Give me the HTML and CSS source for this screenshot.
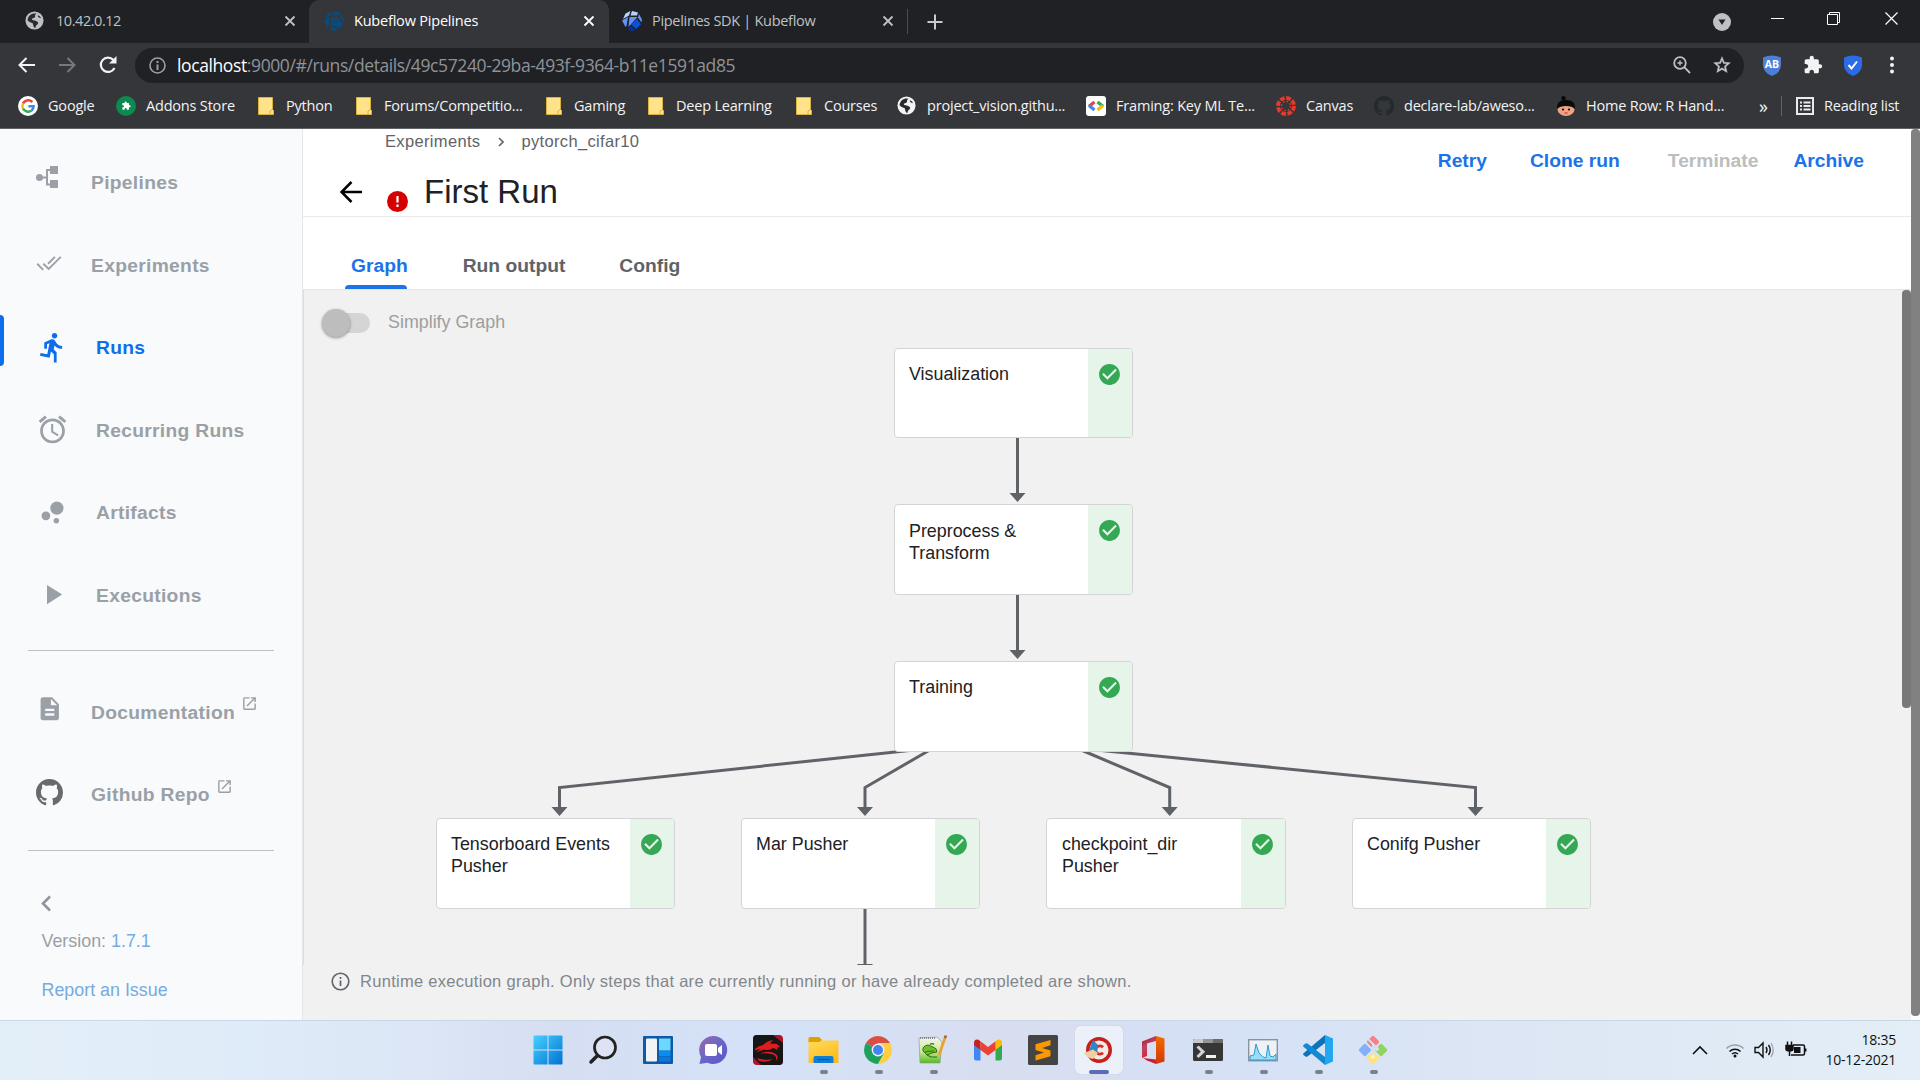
FILE: index.html
```html
<!DOCTYPE html>
<html lang="en">
<head>
<meta charset="utf-8">
<title>Kubeflow Pipelines</title>
<link rel="stylesheet" href="styles.css">
</head>
<body>
<svg class="defs" width="0" height="0">
  <defs>
    <symbol id="close" viewBox="0 0 12 12"><path d="M1.5 1.5l9 9M10.5 1.5l-9 9" stroke="currentColor" stroke-width="1.8" fill="none"/></symbol>
    <symbol id="globe" viewBox="0 0 20 20"><circle cx="10" cy="10" r="9.500" fill="currentColor"/><path d="M2.600 9.500c1.400 2 3.200 2.600 4.800 3 1 .300 1.100 1.300 1.200 2.300.1 1.300.8 1.700 1.200 2.800h1.400c.2-1.600.3-2.200 1.400-3 1.300-.9 1.800-2.400.5-3.300-1.300-.8-2.400-1.400-4.200-1.500-1.500-.1-2-.8-1.200-1.800.7-.9 2-.5 2.700-1.400.6-.8-.2-1.500.3-2.300.3-.6.8-1 1.400-1.500C7.500 1.600 3.200 4.500 2.600 9.500zM13.500 4.500c-.3 1.500.6 2.600 3.500 3.200-.8-1.700-1.800-2.700-3.500-3.200z" fill="#2b2c2f"/></symbol>
    <symbol id="folder" viewBox="0 0 16 18"><path d="M.5.5h14v12l1 1v4H.5z" fill="#ffe28a" stroke="#dcb23e"/><path d="M12 17.500v-3.500l2.500-1.500" fill="none" stroke="#dcb23e"/></symbol>
    <symbol id="github" viewBox="0 0 16 16"><path d="M8 0C3.580 0 0 3.580 0 8c0 3.540 2.290 6.530 5.470 7.590.4.070.55-.17.55-.38 0-.19-.01-.82-.01-1.490-2.010.37-2.530-.49-2.690-.94-.09-.23-.48-.94-.82-1.130-.28-.15-.68-.52-.01-.53.63-.01 1.080.58 1.230.82.72 1.210 1.870.87 2.330.66.07-.52.28-.87.51-1.070-1.780-.2-3.640-.89-3.640-3.950 0-.87.31-1.590.82-2.150-.08-.2-.36-1.020.08-2.120 0 0 .67-.21 2.200.82.64-.18 1.320-.27 2-.27s1.360.09 2 .27c1.530-1.040 2.200-.82 2.200-.82.44 1.100.16 1.920.08 2.120.51.56.82 1.270.82 2.150 0 3.070-1.870 3.750-3.650 3.950.29.25.54.73.54 1.480 0 1.070-.01 1.930-.01 2.200 0 .21.15.46.55.38A8.010 8.010 0 0 0 16 8c0-4.420-3.580-8-8-8z" fill="currentColor"/></symbol>
    <symbol id="kube" viewBox="0 0 22 22"><path class="k1" d="M4.500 3.500L9.500 1 8 5.500 2 9z"/><path class="k1" d="M11 1l6 1.500-1 3H9.500z"/><path class="k2" d="M1 10.500L7 7l-1.500 9L4.500 17z"/><path class="k2" d="M8.500 7h8L7.500 17z"/><path class="k2" d="M18 4l3 5.500-.5 3-3.500-5z"/><path class="k3" d="M16 9l4 5.500-5 4.500-5-4.500z"/><path class="k4" d="M7 19l2.500-3 4.500 4-3 1.500z"/></symbol>
    <symbol id="ok" viewBox="0 0 24 24"><path d="M12 2C6.480 2 2 6.480 2 12s4.480 10 10 10 10-4.480 10-10S17.520 2 12 2zm-2 15l-5-5 1.410-1.410L10 14.170l7.590-7.590L19 8l-9 9z" fill="#34a853"/></symbol>
    <symbol id="ext" viewBox="0 0 24 24"><path d="M19 19H5V5h7V3H5c-1.110 0-2 .9-2 2v14c0 1.100.89 2 2 2h14c1.100 0 2-.9 2-2v-7h-2v7zM14 3v2h3.590l-9.830 9.830 1.410 1.410L19 6.410V10h2V3h-7z" fill="currentColor"/></symbol>
    <symbol id="puzzle" viewBox="0 0 24 24"><path d="M20.500 11H19V7c0-1.100-.9-2-2-2h-4V3.500C13 2.120 11.880 1 10.500 1S8 2.120 8 3.500V5H4c-1.100 0-1.990.9-1.990 2v3.800H3.500c1.490 0 2.700 1.210 2.700 2.700s-1.210 2.700-2.700 2.700H2V20c0 1.100.9 2 2 2h3.800v-1.500c0-1.490 1.210-2.700 2.700-2.700 1.490 0 2.700 1.210 2.700 2.700V22H17c1.100 0 2-.9 2-2v-4h1.500c1.380 0 2.500-1.120 2.500-2.500S21.880 11 20.500 11z" fill="currentColor"/></symbol>
    <linearGradient id="win" x2="1" y2="1"><stop stop-color="#48d0ff"/><stop offset="1" stop-color="#0072d4"/></linearGradient>
    <linearGradient id="chat" x2="1" y2="1"><stop stop-color="#9a6aa8"/><stop offset=".5" stop-color="#6a66c8"/><stop offset="1" stop-color="#5a55c8"/></linearGradient>
    <linearGradient id="fold" x2=".6" y2="1"><stop stop-color="#ffdb5c"/><stop offset="1" stop-color="#ffbb1c"/></linearGradient>
    <linearGradient id="off" y2="1" x2=".4"><stop stop-color="#a0170f"/><stop offset=".5" stop-color="#c04468"/><stop offset="1" stop-color="#d8232f"/></linearGradient>
    <linearGradient id="off2" y2="1" x2="0"><stop stop-color="#f56a00"/><stop offset="1" stop-color="#d03a04"/></linearGradient>
    <linearGradient id="grass" x2="0" y2="1"><stop stop-color="#f4f7ee"/><stop offset=".55" stop-color="#cfe89a"/><stop offset="1" stop-color="#4fbf1a"/></linearGradient>
  </defs>
</svg>

<div class="tabstrip">
  <div class="tab">
    <svg class="fav globe" width="19" height="19"><use href="#globe"/></svg><span>10.42.0.12</span>
    <svg class="x" width="12" height="12"><use href="#close"/></svg>
  </div>
  <div class="tab active">
    <svg class="fav dim" width="22" height="22"><use href="#kube"/></svg><span>Kubeflow Pipelines</span>
    <svg class="x" width="12" height="12"><use href="#close"/></svg>
  </div>
  <div class="tab third">
    <svg class="fav vivid" width="22" height="22"><use href="#kube"/></svg><span>Pipelines SDK | Kubeflow</span>
    <svg class="x" width="12" height="12"><use href="#close"/></svg>
  </div>
  <svg class="plus" width="16" height="16" viewBox="0 0 16 16"><path d="M8 .5v15M.5 8h15" stroke="#c8cace" stroke-width="2"/></svg>
  <div class="winbtns">
    <svg width="18" height="18" viewBox="0 0 18 18"><circle cx="9" cy="9" r="9" fill="#bdc1c6"/><path d="M5.500 6.500h7L9 12z" fill="#202124"/></svg>
    <svg class="min" width="13" height="13" viewBox="0 0 13 13"><path d="M0 6.500h13" stroke="#fff"/></svg>
    <svg class="max" width="13" height="13" viewBox="0 0 13 13"><path d="M.5 2.500h10v10H.5zM2.500 2.500v-2h10v10h-2" fill="none" stroke="#fff"/></svg>
    <svg class="cls" width="13" height="13" viewBox="0 0 13 13"><path d="M.5.5l12 12M12.500.5l-12 12" stroke="#fff" stroke-width="1.200"/></svg>
  </div>
</div>

<div class="toolbar">
  <div class="navbtns">
    <svg width="18" height="16" viewBox="0 0 18 16"><path d="M8.500 1L1.500 8l7 7M1.500 8H17" fill="none" stroke="#f1f3f4" stroke-width="2"/></svg>
    <svg width="18" height="16" viewBox="0 0 18 16"><path d="M9.500 1l7 7-7 7M16.500 8H1" fill="none" stroke="#76787c" stroke-width="2"/></svg>
    <svg width="20" height="20" viewBox="0 0 20 20"><path d="M16.500 13a7.200 7.200 0 1 1-1.200-8.200" fill="none" stroke="#f1f3f4" stroke-width="2.200"/><path d="M18.500 1v7.500H11z" fill="#f1f3f4"/></svg>
  </div>
  <div class="omnibox">
    <svg width="17" height="17" viewBox="0 0 17 17"><circle cx="8.500" cy="8.500" r="7.500" fill="none" stroke="#9aa0a6" stroke-width="1.600"/><path d="M8.500 7.500V13M8.500 4v2" stroke="#9aa0a6" stroke-width="2"/></svg>
    <span class="url"><b>localhost</b>:9000/#/runs/details/49c57240-29ba-493f-9364-b11e1591ad85</span>
    <svg class="zoomicon" width="18" height="18" viewBox="0 0 18 18"><g fill="none" stroke="#bdc1c6" stroke-width="1.800"><circle cx="7" cy="7" r="5.800"/><path d="M11.200 11.200L17 17"/><path d="M7 4.500v5M4.500 7h5" stroke-width="1.400"/></g></svg>
    <svg width="20" height="20" viewBox="0 0 24 24"><path d="M22 9.240l-7.190-.62L12 2 9.190 8.630 2 9.240l5.460 4.730L5.820 21 12 17.270 18.180 21l-1.630-7.030L22 9.240zM12 15.400l-3.760 2.270 1-4.280-3.320-2.880 4.380-.38L12 6.100l1.710 4.040 4.380.38-3.320 2.880 1 4.280L12 15.400z" fill="#c4c7cb" stroke="#c4c7cb" stroke-width=".5"/></svg>
  </div>
  <div class="extensions">
    <svg width="20" height="21" viewBox="0 0 20 21"><path d="M1 2.500Q10-1.500 19 2.500v8.500q-1 7-9 10Q2 18 1 11z" fill="#4d7fd9"/><text x="10" y="13" text-anchor="middle" class="ab">AB</text></svg>
    <svg class="puz" width="20" height="20"><use href="#puzzle"/></svg>
    <svg width="20" height="21" viewBox="0 0 20 21"><path d="M1 2.500Q10-1.500 19 2.500v8.500q-1 7-9 10Q2 18 1 11z" fill="#2b6be6"/><path d="M5.500 10l3 3.500 5.500-7" fill="none" stroke="#fff" stroke-width="2"/></svg>
    <svg width="6" height="18" viewBox="0 0 6 18"><g fill="#f1f3f4"><circle cx="3" cy="2.500" r="2"/><circle cx="3" cy="9" r="2"/><circle cx="3" cy="15.500" r="2"/></g></svg>
  </div>
</div>

<div class="bookmarks">
  <div class="bm"><svg width="20" height="20" viewBox="0 0 20 20"><circle cx="10" cy="10" r="10" fill="#fff"/><g fill="none" stroke-width="2.500"><path d="M14.300 6.200A5.700 5.700 0 0 0 5 7.500" stroke="#ea4335"/><path d="M5 7.500a5.700 5.700 0 0 0 0 5" stroke="#fbbc05"/><path d="M5 12.500a5.700 5.700 0 0 0 8.600 2" stroke="#34a853"/><path d="M13.600 14.500a5.700 5.700 0 0 0 2-4.200h-5.200" stroke="#4285f4"/></g></svg><span>Google</span></div>
  <div class="bm"><svg width="20" height="20" viewBox="0 0 20 20"><circle cx="10" cy="10" r="10" fill="#0c8a50"/><use href="#puzzle" x="5.500" y="5" width="9.500" height="9.500" color="#fff"/></svg><span>Addons Store</span></div>
  <div class="bm f"><svg width="16" height="18"><use href="#folder"/></svg><span>Python</span></div>
  <div class="bm f"><svg width="16" height="18"><use href="#folder"/></svg><span>Forums/Competitio...</span></div>
  <div class="bm f"><svg width="16" height="18"><use href="#folder"/></svg><span>Gaming</span></div>
  <div class="bm f"><svg width="16" height="18"><use href="#folder"/></svg><span>Deep Learning</span></div>
  <div class="bm f"><svg width="16" height="18"><use href="#folder"/></svg><span>Courses</span></div>
  <div class="bm white"><svg width="19" height="19"><use href="#globe"/></svg><span>project_vision.githu...</span></div>
  <div class="bm"><svg width="20" height="20" viewBox="0 0 20 20"><rect width="20" height="20" rx="3" fill="#fff"/><g fill="none" stroke-width="3.200"><path d="M8.500 6L3 10.300" stroke="#ea4335"/><path d="M3 9.500L8.500 14" stroke="#4285f4"/><path d="M11.500 6l5.500 4.300" stroke="#34a853"/><path d="M17 9.500L11.500 14" stroke="#fbbc05"/></g></svg><span>Framing: Key ML Te...</span></div>
  <div class="bm"><svg width="20" height="20" viewBox="0 0 20 20"><g fill="none" stroke="#e8392b"><circle cx="10" cy="10" r="8" stroke-width="3.800" stroke-dasharray="4.700 1.580"/><circle cx="10" cy="10" r="4.600" stroke-width="1.500" stroke-dasharray="1.500 2.110"/></g></svg><span>Canvas</span></div>
  <div class="bm dark"><svg width="20" height="20"><use href="#github"/></svg><span>declare-lab/aweso...</span></div>
  <div class="bm"><svg width="20" height="20" viewBox="0 0 20 20"><circle cx="7.500" cy="2.200" r="2.200" fill="#0a0a0a"/><ellipse cx="10" cy="13.500" rx="8.500" ry="6.500" fill="#f0a283"/><path d="M1 13Q0 4 10 4t9 9q-3-3-9-3t-9 3z" fill="#0a0a0a"/><circle cx="7" cy="13.500" r="1.100"/><circle cx="13" cy="13.500" r="1.100"/><path d="M8.500 17h3" stroke="#a33"/></svg><span>Home Row: R Hand...</span></div>
  <div class="bm more">»</div>
  <div class="bm reading"><svg width="18" height="18" viewBox="0 0 18 18"><path d="M1 1h16v16H1z" fill="none" stroke="#e8eaed" stroke-width="2"/><path d="M4 5.500h2M4 9h2M4 12.500h2M7.500 5.500h7M7.500 9h7M7.500 12.500h7" stroke="#e8eaed" stroke-width="1.800"/></svg><span>Reading list</span></div>
</div>

<div class="app">
  <nav class="sidenav">
    <a class="item narrow"><i><svg width="22" height="22" viewBox="0 0 22 22"><path d="M3.500 11.500H11M14 4h-3v14.500h3" fill="none" stroke="#9aa0a6" stroke-width="2"/><circle cx="3.500" cy="11.500" r="3.500" fill="#9aa0a6"/><path d="M14 0h8v8h-8zM14 14h8v8h-8z" fill="#9aa0a6"/></svg></i><span>Pipelines</span></a>
    <a class="item narrow"><i class="exp"><svg width="26" height="26" viewBox="0 0 24 24"><path fill="none" stroke="#9aa0a6" stroke-width="1.700" d="M17.500 6.300l-6.400 6.400M22.900 6.300L11.700 17.500 6.800 12.700M1.100 12.700L6.700 18.300"/></svg></i><span>Experiments</span></a>
    <a class="item current"><i><svg width="33" height="33" viewBox="0 0 24 24"><path fill="#0d6eed" d="M13.490 5.480c1.100 0 2-.9 2-2s-.9-2-2-2-2 .9-2 2 .9 2 2 2zm-3.600 13.900l1-4.400 2.100 2v6h2v-7.500l-2.100-2 .6-3c1.300 1.500 3.300 2.500 5.500 2.500v-2c-1.900 0-3.500-1-4.300-2.400l-1-1.600c-.4-.6-1-1-1.700-1-.3 0-.5.1-.8.1l-5.200 2.200v4.700h2v-3.400l1.800-.7-1.600 8.100-4.900-1-.4 2 7 1.400z"/></svg></i><span>Runs</span></a>
    <a class="item"><i><svg width="33" height="33" viewBox="0 0 24 24"><path fill="#9aa0a6" d="M22 5.720l-4.600-3.860-1.290 1.530 4.600 3.860L22 5.720zM7.880 3.390L6.600 1.860 2 5.710l1.290 1.530 4.590-3.850zM12.500 8H11v6l4.750 2.850.75-1.230-4-2.370V8zM12 4c-4.970 0-9 4.030-9 9s4.020 9 9 9c4.970 0 9-4.030 9-9s-4.030-9-9-9zm0 16c-3.870 0-7-3.130-7-7s3.130-7 7-7 7 3.130 7 7-3.130 7-7 7z"/></svg></i><span>Recurring Runs</span></a>
    <a class="item"><i><svg width="33" height="33" viewBox="0 0 24 24" fill="#9aa0a6"><circle cx="7.200" cy="14.400" r="3.200"/><circle cx="14.800" cy="18" r="2"/><circle cx="15.200" cy="8.800" r="4.800"/></svg></i><span>Artifacts</span></a>
    <a class="item"><i><svg width="33" height="33" viewBox="0 0 24 24"><path fill="#9aa0a6" d="M8 5v14l11-7z"/></svg></i><span>Executions</span></a>
    <hr>
    <a class="item narrow doc"><i><svg width="27.500" height="27.500" viewBox="0 0 24 24"><path fill="#9aa0a6" d="M14 2H6c-1.100 0-1.990.9-1.990 2L4 20c0 1.100.89 2 1.990 2H18c1.100 0 2-.9 2-2V8l-6-6zm2 16H8v-2h8v2zm0-4H8v-2h8v2zm-3-5V3.500L18.500 9H13z"/></svg></i><span>Documentation</span><svg class="ext" width="17" height="17"><use href="#ext"/></svg></a>
    <a class="item narrow gh"><i><svg width="27" height="27"><use href="#github"/></svg></i><span>Github Repo</span><svg class="ext" width="17" height="17"><use href="#ext"/></svg></a>
    <hr>
    <svg class="collapse" width="10" height="17" viewBox="0 0 10 17"><path d="M9 1.500l-7 7 7 7" fill="none" stroke="#8f959b" stroke-width="2.600"/></svg>
    <p class="ver">Version: <a>1.7.1</a></p>
    <p class="issue"><a>Report an Issue</a></p>
  </nav>

  <main class="page">
    <header class="head">
      <div class="titles">
        <div class="crumbs"><span>Experiments</span><svg width="6" height="10" viewBox="0 0 6 10"><path d="M1 1l4 4-4 4" fill="none" stroke="#5f6368" stroke-width="1.600"/></svg><span>pytorch_cifar10</span></div>
        <div class="title">
          <svg class="back" width="22" height="22" viewBox="0 0 22 22"><path d="M11.500 1L1.500 11l10 10M1.500 11H22" fill="none" stroke="#000" stroke-width="2.500"/></svg>
          <svg class="err" width="21" height="21" viewBox="0 0 21 21"><circle cx="10.500" cy="10.500" r="10.500" fill="#d50000"/><path d="M10.500 5v6.500M10.500 13.500v2.400" stroke="#fff" stroke-width="2.200"/></svg>
          <h1>First Run</h1>
        </div>
      </div>
      <div class="actions"><a>Retry</a><a>Clone run</a><a class="off">Terminate</a><a>Archive</a></div>
    </header>
    <div class="tabs"><a class="on">Graph</a><a>Run output</a><a>Config</a></div>
    <section class="graphpane">
      <div class="simplify"><span class="switch"></span>Simplify Graph</div>
      <div class="canvas">
        <svg class="edges" width="1608" height="675" viewBox="303 290 1608 675">
          <g fill="none" stroke="#5f6368" stroke-width="3">
            <path d="M1017.500 438v57M1017.500 595v57"/>
            <path d="M940 747.300L559.500 787.500V809"/><path d="M935 747L865 787.500V809"/>
            <path d="M1074 747L1169.700 787.500V809"/><path d="M1076 748L1475.500 787.500V809"/>
            <path d="M865 909v56"/>
          </g>
          <path fill="#5f6368" d="M1009.500 493h16l-8 9zM1009.500 650h16l-8 9zM551.500 807h16l-8 9zM857 807h16l-8 9zM1161.700 807h16l-8 9zM1467.500 807h16l-8 9zM857 964h16l-8 9z"/>
        </svg>
        <div class="node n1"><p>Visualization</p><div><svg width="25" height="25"><use href="#ok"/></svg></div></div>
        <div class="node n2"><p>Preprocess &amp; Transform</p><div><svg width="25" height="25"><use href="#ok"/></svg></div></div>
        <div class="node n3"><p>Training</p><div><svg width="25" height="25"><use href="#ok"/></svg></div></div>
        <div class="node n4"><p>Tensorboard Events Pusher</p><div><svg width="25" height="25"><use href="#ok"/></svg></div></div>
        <div class="node n5"><p>Mar Pusher</p><div><svg width="25" height="25"><use href="#ok"/></svg></div></div>
        <div class="node n6"><p>checkpoint_dir Pusher</p><div><svg width="25" height="25"><use href="#ok"/></svg></div></div>
        <div class="node n7"><p>Conifg Pusher</p><div><svg width="25" height="25"><use href="#ok"/></svg></div></div>
      </div>
      <div class="legend"><svg width="19" height="19" viewBox="0 0 19 19"><circle cx="9.500" cy="9.500" r="8.300" fill="none" stroke="#5f6368" stroke-width="1.600"/><path d="M9.500 8.500V14M9.500 5v2" stroke="#5f6368" stroke-width="1.700"/></svg><span>Runtime execution graph. Only steps that are currently running or have already completed are shown.</span></div>
      <div class="thumb"></div>
    </section>
  </main>
  <div class="pagebar"></div>
</div>

<footer class="taskbar">
  <div class="apps">
    <span><svg width="30" height="30" viewBox="0 0 30 30"><path d="M.5 1.500Q.5.5 1.500.5h13v14H.5zM15.500.5h13q1 0 1 1v13h-14zM.5 15.500h14v14h-13q-1 0-1-1zM15.500 15.500h14v13q0 1-1 1h-13z" fill="url(#win)"/></svg></span>
    <span><svg width="30" height="30" viewBox="0 0 30 30"><circle cx="17" cy="12.500" r="10.500" fill="#e6e8f6" fill-opacity=".5" stroke="#222" stroke-width="2.700"/><path d="M9.500 20.500L3 27" stroke="#222" stroke-width="3.500" stroke-linecap="round"/></svg></span>
    <span><svg width="30" height="30" viewBox="0 0 30 30"><rect y="1" width="30" height="28" rx="1" fill="#0c5aa8"/><rect x="3" y="3.500" width="11" height="23" rx="1" fill="#f2f3f5"/><rect x="16" y="3.500" width="11.500" height="12" fill="#6bd8ff"/><rect x="16" y="16" width="11.500" height="5" fill="#0a8cf0"/><rect x="16" y="21.500" width="11.500" height="5" fill="#0a78dc"/></svg></span>
    <span><svg width="30" height="30" viewBox="0 0 30 30"><path d="M15 1a14 14 0 1 1-5.500 26.800L1.500 29 3 22A14 14 0 0 1 15 1z" fill="url(#chat)"/><rect x="7" y="9" width="12" height="12" rx="2" fill="#fff"/><path d="M20 13l4-3v10l-4-3z" fill="#fff"/></svg></span>
    <span><svg width="30" height="30" viewBox="0 0 30 30"><rect width="30" height="30" rx="4" fill="#b3122a"/><path d="M4 0h16l10 8v18q0 4-4 4H8l-8-8V4q0-4 4-4z" fill="#161616"/><path d="M2 14q3-3 8-4 4-4 10-5l-3 3.500 7 .5 3 3-3 .5 1 2.500-5-2q-4 3-9 1.500l-8 3 5-4-6 2zM7 18.500q8-3 14-.5 6 3 2 8 1-5-3-6.500-6-2-13-1zM4 23q10 3 16 1-5 4-14 2z" fill="#e01c1c"/></svg></span>
    <span class="run"><svg width="31" height="30" viewBox="0 0 31 30"><path d="M.5 6V3.500q0-1.500 1.500-1.500h9l3 3-2 3H.5z" fill="#e0a100"/><path d="M.5 7h11l2-1.500h17V28H.5z" fill="url(#fold)"/><path d="M5.500 28v-5q0-2 2-2h16q2 0 2 2v5z" fill="#0f7fd6"/><path d="M9.500 24.500h12" stroke="#0a569c" stroke-width="1.200"/></svg></span>
    <span class="run"><svg width="28" height="28" viewBox="0 0 28 28"><path d="M14 14L1.900 7A14 14 0 0 1 26.100 7z" fill="#d94f43"/><path d="M14 14L1.900 7A14 14 0 0 0 14 28l6-10.500z" fill="#1ea15f"/><path d="M14 14l6 3.500L14 28A14 14 0 0 0 26.100 7H14z" fill="#ffce42"/><circle cx="14" cy="14" r="6.400" fill="#f1f1f1"/><circle cx="14" cy="14" r="5" fill="#4285f4"/></svg></span>
    <span class="run"><svg width="30" height="30" viewBox="0 0 30 30"><path d="M1 3l18-1 5 5-2 21L2 28z" fill="url(#grass)" stroke="#999" stroke-width=".7"/><path d="M2 3h16" stroke="#888" stroke-width="2" stroke-dasharray="1 1"/><path d="M5 16q-1-5 5-6l5 2q4 1 4 5l-5 1-5 2z" fill="#6fc02c" stroke="#376f17"/><path d="M12 9.500q2-2 4 0M7 17q4-1 9-1M9 20l4 2h6" fill="none" stroke="#376f17" stroke-width="1.200"/><path d="M27 3L21 20" stroke="#e9a22c" stroke-width="2.600"/><path d="M27.800.5L27 3.200" stroke="#a55b4c" stroke-width="2.600"/></svg></span>
    <span><svg width="28" height="22" viewBox="0 0 28 22"><path d="M0 4v15.500q0 2 2 2h4.500V9z" fill="#4285f4"/><path d="M28 4v15.500q0 2-2 2h-4.500V9z" fill="#34a853"/><path d="M0 6V3.500Q.5-.5 4.500.8L6.500 2.200V11L0 6z" fill="#c5221f"/><path d="M28 6V3.500q-.5-4-4.500-2.700l-2 1.400V11z" fill="#fbbc04"/><path d="M6.500 2.200L14 8l7.500-5.800V11L14 16.500 6.500 11z" fill="#ea4335"/></svg></span>
    <span><svg width="30" height="30" viewBox="0 0 30 30"><rect width="30" height="30" rx="1.500" fill="#444"/><path d="M22.500 5v5.200L14 13l8.500 2.600v5.600L7.500 25.500v-5.200l8.500-2.800-8.500-2.600V9.300z" fill="#ff9800"/></svg></span>
    <span class="run focus"><svg width="30" height="30" viewBox="0 0 30 30"><circle cx="16" cy="15" r="13" fill="#c6201c"/><circle cx="16" cy="15" r="9.500" fill="#f5e9e6"/><path d="M20 12.200a4.200 4.200 0 1 0 0 5.600" fill="none" stroke="#d23129" stroke-width="2.800"/><path d="M10 5l5 5-1 7-8-1z" fill="#2c86c7"/><path d="M1 18l9-3.500 5 3.500-5 6q-6-1-9-6z" fill="#f0d0a0"/></svg></span>
    <span><svg width="24" height="30" viewBox="0 0 24 30"><path d="M15 1L1 6.500V23l5-2V8.500L15 6z" fill="url(#off)"/><path d="M15 1l8.500 2.500v23L15 29z" fill="url(#off2)"/><path d="M2 23l13 1.500V29L6 25.500z" fill="#d01c3a"/></svg></span>
    <span class="run"><svg width="30" height="24" viewBox="0 0 30 24"><rect y="1" width="30" height="22" rx="1.500" fill="#363636"/><path d="M0 5V2.500Q0 1 1.500 1H10v4z" fill="#c8c8c8"/><path d="M10 1h10v4H10z" fill="#959595"/><path d="M20 1h8.500Q30 1 30 2.500V5H20z" fill="#6b6b6b"/><path d="M4.500 8.500l5.500 5.200-5.500 5.300" fill="none" stroke="#d4d4d4" stroke-width="3"/><path d="M13 18.500h10" stroke="#f1f1f1" stroke-width="3"/></svg></span>
    <span class="run"><svg width="30" height="24" viewBox="0 0 30 24"><rect x=".7" y="1.700" width="28.600" height="21" fill="#eef2f6" stroke="#8a949c" stroke-width="1.400"/><path d="M2 22v-4l4-1 2-11 3 9 4 4 3 1 2-13 2 11 3 1 3-3v6z" fill="#9bdcf7" stroke="#2d9ad6" stroke-width="1"/></svg></span>
    <span class="run"><svg width="30" height="30" viewBox="0 0 30 30"><path d="M22 0l8 3.500v23L22 30z" fill="#25a7f0"/><path d="M22 0v8L4.500 21.500q-1 .6-2 0L.5 20q-.8-1 0-1.800z" fill="#0a73ba"/><path d="M22 30v-8L4.500 8.500q-1-.6-2 0L.5 10q-.8 1 0 1.800z" fill="#1389d4"/></svg></span>
    <span class="run"><svg width="30" height="30" viewBox="0 0 30 30"><g transform="translate(15 15) rotate(45)"><rect x="-10.500" y="-10.500" width="9.500" height="9.500" rx="1.500" fill="#f98080"/><rect x="1" y="-10.500" width="9.500" height="9.500" rx="1.500" fill="#8fd65e"/><rect x="-10.500" y="1" width="9.500" height="9.500" rx="1.500" fill="#82b0fb"/><rect x="1" y="1" width="9.500" height="9.500" rx="1.500" fill="#ffe27a"/></g><path d="M10 4l9 9M15 9v13" stroke="#d9dff2" stroke-width="2"/><circle cx="19" cy="14" r="2" fill="#d9dff2"/><circle cx="15" cy="22" r="2" fill="#fff2c0"/></svg></span>
  </div>
  <div class="tray">
    <svg width="16" height="10" viewBox="0 0 16 10"><path d="M1 9l7-7 7 7" fill="none" stroke="#111" stroke-width="1.600"/></svg>
    <svg class="wifi" width="20" height="16" viewBox="0 0 20 16"><g fill="none" stroke-width="1.500"><path d="M1.500 6.500a12 12 0 0 1 17 0" stroke="#999fa8"/><path d="M4.500 9.500a8 8 0 0 1 11 0M7 12a4.500 4.500 0 0 1 6 0" stroke="#111"/></g><circle cx="10" cy="14" r="1.500" fill="#111"/></svg>
    <svg class="spk" width="20" height="18" viewBox="0 0 20 18"><path d="M1 6.500h3.500L9 2v14l-4.500-4.500H1z" fill="none" stroke="#111" stroke-width="1.400"/><path d="M12 6q2 3 0 6M14.500 4q3.500 5 0 10" fill="none" stroke="#111" stroke-width="1.400"/><path d="M17 2q4.500 7 0 14" fill="none" stroke="#999fa8" stroke-width="1.200"/></svg>
    <svg class="bat" width="22" height="20" viewBox="0 0 22 20"><path d="M8 5h10q1.500 0 1.500 1.500v7Q19.500 15 18 15H6" fill="none" stroke="#111" stroke-width="1.500"/><path d="M9 7h6.500v6H9zM20 8.500h1.500v3H20z" fill="#111"/><path d="M2.500 1.500v4M6.500 1.500v4M1 5.500h7V9q0 2-3.500 2T1 9zM4.500 10v6" stroke="#111" stroke-width="1.500" fill="#111"/></svg>
    <div class="clock"><span>18:35</span><span>10-12-2021</span></div>
  </div>
</footer>
</body>
</html>
```
FILE: styles.css
```css
* { box-sizing: border-box; }
body {
  margin: 0; width: 1920px; height: 1080px; overflow: hidden;
  display: flex; flex-direction: column;
  font-family: "Liberation Sans", Arial, sans-serif; background: #fff;
}
p, h1 { margin: 0; font-weight: normal; }
svg { display: block; flex: none; }
.defs { position: absolute; }

/* browser chrome */
.tabstrip, .toolbar, .bookmarks { font-family: "Open Sans", "Noto Sans", sans-serif; flex: none; display: flex; align-items: center; white-space: nowrap; }
.tabstrip { height: 43px; background: #202124; color: #bdc1c6; font-size: 14.500px; letter-spacing: -.350px; }
.tab { width: 309px; height: 43px; padding: 0 13px 2px 25px; display: flex; align-items: center; gap: 12px; }
.tab:first-child { letter-spacing: -.450px; }
.tab .x { margin-left: auto; }
.tab.active { width: 300px; background: #35363a; color: #fff; border-radius: 10px 10px 0 0; padding: 0 14px 2px 14px; gap: 9px; letter-spacing: -.200px; }
.tab.third { width: 299px; padding-left: 12px; gap: 9px; border-right: 1px solid #4a4c50; height: 25px; padding-right: 13px; letter-spacing: -.300px; }
.globe { color: #bdc1c6; }
.white svg { color: #f1f3f4; }
.k1 { fill: var(--k1); }
.k2 { fill: var(--k2); }
.k3 { fill: var(--k3); }
.k4 { fill: var(--k4); }
.dim { --k1: #0b4a7d; --k2: #0b4a7d; --k3: #0b4a7d; --k4: #0b4a7d; }
.vivid { --k1: #b9d2fb; --k2: #5f93f5; --k3: #0b50d8; --k4: #0a2f9c; }
.plus { margin-left: 19px; }
.winbtns { margin-left: auto; display: flex; align-items: center; }
.winbtns svg:first-child { margin-right: 1px; }
.winbtns .min { margin-left: 39px; margin-top: -6px; }
.winbtns .max { margin-left: 43px; margin-top: -6px; }
.winbtns .cls { margin: -6px 22px 0 45px; }

.toolbar { height: 44px; background: #35363a; }
.navbtns { width: 135px; display: flex; align-items: center; padding-left: 18px; gap: 22px; }
.omnibox { width: 1609px; height: 35px; border-radius: 18px; background: #202124; display: flex; align-items: center; padding: 0 12px 0 14px; }
.url { margin-left: 11px; font-size: 17.500px; color: #8f9398; letter-spacing: -.390px; }
.url b { font-weight: normal; color: #fff; }
.zoomicon { margin-left: auto; margin-right: 21px; }
.extensions { display: flex; align-items: center; padding-left: 18px; gap: 20.500px; }
.extensions svg:last-child { margin-left: 5px; }
.ab { font: bold 10.500px "Open Sans", sans-serif; fill: #fff; }
.puz { color: #f1f3f4; }

.bookmarks {
  height: 42px; background: #35363a; border-bottom: 1px solid #606266; color: #f1f3f4;
  display: grid; padding-left: 18px; padding-bottom: 4px; font-size: 14.500px; letter-spacing: -.190px;
  grid-template-columns: 98px 142px 98px 190px 102px 148px 101px 189px 190px 98px 182px 203px 22px 1fr;
}
.bm { display: flex; align-items: center; gap: 10px; }
.bm.f { gap: 12px; }
.bm.f, .bm.dark { letter-spacing: -.210px; }
.bm.white { gap: 11px; }
.bm.dark svg { color: #24292e; }
.more { font-size: 18px; }
.reading { border-left: 1px solid #5f6368; height: 20px; padding-left: 14px; }

/* app */
.app { height: 891px; flex: none; display: flex; }
.sidenav { width: 303px; background: #f8fafc; border-right: 1px solid #e4e6e9; padding-top: 12px; }
.item {
  height: 82.500px; display: flex; align-items: center; padding-left: 36px;
  font-size: 19.250px; font-weight: bold; letter-spacing: .300px; color: #9aa0a6;
}
.item span { padding-top: 2px; }
.item i { width: 60px; }
.item.narrow i { width: 55px; margin-top: -10px; }
.item.narrow i.exp { margin-top: -3px; }
.item.doc i { margin-top: -7px; }
.item.gh i { margin-top: -5px; color: #6a6a6a; }
.item.gh span { padding-top: 1px; }
.item.current { color: #0d6eed; position: relative; }
.item.current::before { content: ""; position: absolute; left: 0; top: 9px; width: 4px; height: 51px; background: #0d6eed; border-radius: 0 4px 4px 0; }
.ext { margin: -17px 0 0 6px; }
.sidenav hr { margin: 14px 28px 20px; border: 0; height: 1px; background: #bdc1c6; }
.collapse { margin: 44px 0 0 41px; }
.ver, .issue { padding-left: 41.500px; font-size: 17.875px; line-height: 22px; color: #9aa0a6; }
.ver { margin-top: 18px; }
.issue { margin-top: 27px; }
.ver a, .issue a { color: #75abe0; }

.page { width: 1608px; display: flex; flex-direction: column; background: #fff; }
.head { height: 88px; border-bottom: 1px solid #e8eaed; display: flex; justify-content: space-between; }
.crumbs { display: flex; align-items: center; gap: 18px; padding-left: 82px; height: 25px; font-size: 16.500px; letter-spacing: .340px; color: #5f6368; }
.crumbs span:last-child { margin-left: -1px; }
.title { display: flex; align-items: center; padding-left: 37px; height: 76px; margin-top: 0; }
.title .err { margin: 18px 0 0 25px; }
.title h1 { font-size: 33px; color: #202124; margin-left: 16px; }
.actions { display: flex; padding: 21px 47px 0 0; font-size: 19.250px; font-weight: bold; color: #1a73e8; gap: 43px; }
.actions .off { color: #bdbdbd; margin: 0 -8px 0 5px; }
.tabs { height: 73px; border-bottom: 1px solid #e4e4e4; display: flex; align-items: flex-end; padding-left: 42px; gap: 43px; font-size: 19.250px; font-weight: bold; color: #5f6368; }
.tabs a { height: 38px; padding-left: 6px; line-height: 30px; border-radius: 0 0 0 0; }
.tabs .on { position: relative; color: #1a73e8; }
.tabs .on::after { content: ""; position: absolute; left: 0; bottom: 0; width: 62px; height: 4px; background: #1a73e8; border-radius: 4px 4px 0 0; }
.tabs a:nth-child(2) { padding-left: 12px; }
.tabs a:nth-child(3) { padding-left: 11px; }
.graphpane { position: relative; flex: 1; background: #f1f1f1; display: flex; flex-direction: column; }
.simplify { position: absolute; left: 19px; top: 18px; z-index: 2; display: flex; align-items: center; gap: 18px; height: 28px; font-size: 17.875px; color: #9e9e9e; }
.switch { position: relative; width: 48px; height: 20px; border-radius: 10px; background: #d5d5d5; margin-top: 2px; }
.switch::before { content: ""; position: absolute; left: 0; top: -4px; width: 28px; height: 28px; border-radius: 50%; background: #bdbdbd; box-shadow: 0 1px 3px rgba(0,0,0,.4); }
.canvas { position: relative; height: 675px; flex: none; border-left: 1px solid #dedede; overflow: hidden; }
.edges { position: absolute; left: -1px; top: 0; }
.node { position: absolute; width: 239px; height: 91px; background: #fff; border: 1px solid #d2d4d6; border-radius: 4px; display: flex; justify-content: space-between; font-size: 17.875px; line-height: 22px; color: #202124; overflow: hidden; }
.node p { padding: 14px 0 0 14px; width: 190px; }
.node div { width: 44px; background: #e6f4ea; padding: 13px 0 0 9px; }
.n1 { left: 590px; top: 58px; height: 90px; }
.n2 { left: 590px; top: 214px; }
.n3 { left: 590px; top: 371px; }
.n4 { left: 132px; top: 528px; }
.n5 { left: 437px; top: 528px; }
.n6 { left: 742px; top: 528px; width: 240px; }
.n7 { left: 1048px; top: 528px; }
.n2 p { padding-top: 15px; }
.n6 p { padding-left: 15px; }
.legend { display: flex; align-items: center; gap: 10px; padding-left: 28px; height: 32px; font-size: 16.500px; color: #80868b; letter-spacing: .290px; }
.thumb { position: absolute; right: 0; top: 0; width: 9px; height: 418px; border-radius: 4px; background: #787878; }
.pagebar { width: 9px; height: 887px; background: #818181; border-radius: 4px; }

/* taskbar */
.taskbar { height: 60px; flex: none; display: flex; border-top: 1px solid #c9d6e8; background: linear-gradient(90deg, #e3eef8 0, #e0edf9 180px, #dce6f6 420px, #d6def2 560px, #d4e2f7 760px, #d8def0 1000px, #d5e1f6 1250px, #dde6f4 1500px, #e3eef7 1920px); }
.apps { margin-left: 521px; display: grid; grid-template-columns: repeat(16, 55px); height: 59px; }
.apps span { position: relative; display: flex; align-items: center; justify-content: center; padding: 0 1px 1px 0; }
.run::after { content: ""; position: absolute; left: 24px; top: 49px; width: 8px; height: 4px; border-radius: 2px; background: #7b808c; }
.focus::before { content: ""; position: absolute; left: 4px; top: 5px; width: 48px; height: 48px; border-radius: 5px; background: #ecf0f9; box-shadow: 0 0 1px #aab; }
.focus svg { position: relative; }
.focus::after { left: 18px; width: 20px; background: #5c6bb5; }
.tray { margin-left: auto; padding: 0 24px 2px 0; display: flex; align-items: center; font-family: "Open Sans", sans-serif; font-size: 14px; color: #111; }
.wifi { margin-left: 17px; }
.spk { margin-left: 9px; }
.bat { margin-left: 11px; }
.clock { width: 80px; margin-left: 9px; display: flex; flex-direction: column; align-items: flex-end; line-height: 20px; letter-spacing: -.250px; }
```
